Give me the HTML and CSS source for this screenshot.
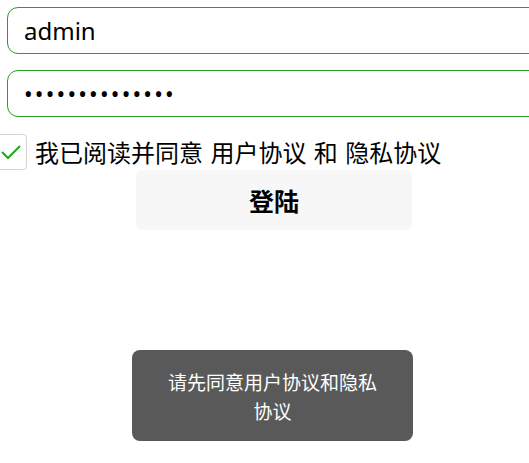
FILE: index.html
```html
<!DOCTYPE html>
<html lang="zh-CN">
<head>
    <meta charset="UTF-8">
    <meta name="viewport" content="width=device-width, initial-scale=1.0">
    <title>登陆</title>
    <link rel="stylesheet" href="styles.css">
</head>
<body>
    <!-- Login Form -->
    <div class="login">
        <input type="text" class="login-input" value="admin">
        <input type="password" class="login-input password" value="12345678901234">

        <div class="agree">
            <span class="agree-box">
                <svg width="22" height="22" viewBox="0 0 22 22">
                    <path d="M2 11 L8 17 L20 5" fill="none" stroke="#1aad19" stroke-width="2"/>
                </svg>
            </span>
            <span class="agree-text">我已阅读并同意 用户协议 和 隐私协议</span>
        </div>

        <button class="login-button">登陆</button>
    </div>

    <!-- Toast -->
    <div class="toast">请先同意用户协议和隐私协议</div>
</body>
</html>
```

FILE: styles.css
```css
body {
    font-family: "Noto Sans", "Noto Sans CJK SC", sans-serif;
    background-color: #ffffff;
    margin: 0;
    width: 529px;
    height: 463px;
    overflow: hidden;
    position: relative;
}

.login {
    width: 534px;
    padding: 7px 0 0 7px;
    display: flex;
    flex-direction: column;
}

.login-input {
    height: 47px;
    box-sizing: border-box;
    border: 1px solid #2a9d2a;
    border-radius: 11px;
    padding: 0 16px;
    font-family: "Noto Sans", "Noto Sans CJK SC", sans-serif;
    font-size: 24px;
    color: #000;
    outline: none;
    margin: 0 0 16px 0;
}

.login-input.password {
    font-size: 23px;
    letter-spacing: 2.2px;
    margin-bottom: 17px;
}

.agree {
    display: flex;
    align-items: center;
    margin-left: -16px;
    height: 36px;
}

.agree-box {
    width: 36px;
    height: 36px;
    box-sizing: border-box;
    border: 1px solid #d4d4d4;
    border-radius: 4px;
    display: flex;
    align-items: center;
    justify-content: flex-end;
    padding-right: 4px;
    margin-right: 8px;
}

.agree-text {
    font-family: "Noto Sans CJK SC", sans-serif;
    font-size: 24px;
    word-spacing: 2px;
    color: #000;
    line-height: 36px;
    white-space: nowrap;
}

.login-button {
    align-self: center;
    width: 276px;
    height: 60px;
    border: none;
    border-radius: 6px;
    background-color: #f7f7f7;
    font-family: "Noto Sans CJK SC", sans-serif;
    font-size: 25px;
    font-weight: bold;
    color: #000;
}

.toast {
    position: absolute;
    left: 132px;
    top: 350px;
    width: 281px;
    box-sizing: border-box;
    padding: 17px 30px 16px;
    background-color: #595959;
    border-radius: 8px;
    color: #ffffff;
    font-family: "Noto Sans CJK SC", sans-serif;
    font-size: 19px;
    line-height: 29px;
    text-align: center;
}
```
